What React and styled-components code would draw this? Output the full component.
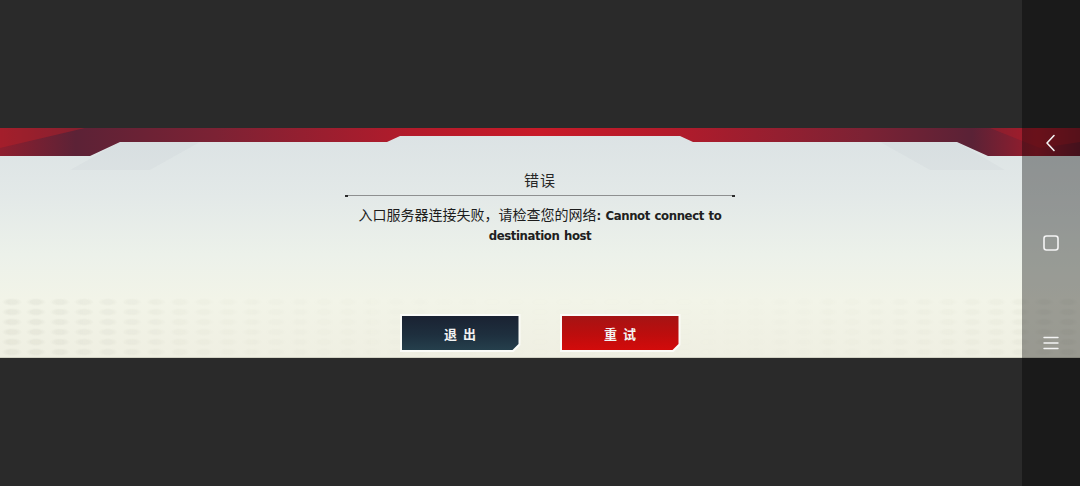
import React from "react";
import styled, { createGlobalStyle } from "styled-components";

const Global = createGlobalStyle`
  html, body { margin: 0; padding: 0; background: #2a2a2a; }
  body { width: 1080px; height: 486px; overflow: hidden; }
  #root { width: 1080px; height: 486px; }
`;

const Screen = styled.div`
  position: relative;
  width: 1080px;
  height: 486px;
  background: #2a2a2a;
  display: flex;
  flex-direction: column;
  padding-top: 128px;
  box-sizing: border-box;
  font-family: "Noto Sans CJK SC", "Noto Sans", sans-serif;
`;

const Band = styled.div`
  position: relative;
  height: 230px;
  width: 100%;
  box-sizing: border-box;
  background: linear-gradient(180deg, #dbe2e4 0%, #e3e9e8 30%, #ecf1ea 55%, #f2f4e8 75%, #efefe2 100%);
  border-bottom: 1px solid #d2d2c4;
  display: flex;
  flex-direction: column;
  align-items: center;
  padding-top: 42px;
  padding-bottom: 5px;
  overflow: hidden;
`;

const HexFloor = styled.div`
  position: absolute;
  left: 0;
  right: 0;
  bottom: 0;
  height: 60px;
  background-image: radial-gradient(ellipse 10px 4px at 50% 50%, rgba(110, 110, 90, 0.07) 50%, transparent 100%);
  background-size: 24px 10px;
  -webkit-mask-image: linear-gradient(90deg, #000 0%, rgba(0,0,0,0.35) 20%, rgba(0,0,0,0.08) 45%, rgba(0,0,0,0.08) 65%, rgba(0,0,0,0.3) 85%, rgba(0,0,0,0.6) 100%);
  mask-image: linear-gradient(90deg, #000 0%, rgba(0,0,0,0.35) 20%, rgba(0,0,0,0.08) 45%, rgba(0,0,0,0.08) 65%, rgba(0,0,0,0.3) 85%, rgba(0,0,0,0.6) 100%);
  pointer-events: none;
`;

const Header = styled.svg`
  position: absolute;
  left: 0;
  top: 0;
  width: 1080px;
  height: 60px;
  pointer-events: none;
`;

const Title = styled.div`
  position: relative;
  font-size: 15px;
  line-height: 20px;
  color: #262626;
  letter-spacing: 1px;
`;

const Divider = styled.div`
  position: relative;
  display: flex;
  align-items: center;
  width: 390px;
  margin-top: 4px;
  height: 3px;
`;

const Tick = styled.span`
  width: 3px;
  height: 2px;
  background: #2c2c2c;
`;

const Rule = styled.span`
  flex: 1;
  height: 1px;
  background: #8e9090;
`;

const Message = styled.div`
  position: relative;
  margin-top: 8px;
  font-size: 14px;
  line-height: 18px;
  color: #1c1c1c;
  text-align: center;
`;

const Latin = styled.span`
  font-family: "DejaVu Sans", sans-serif;
  font-weight: bold;
  font-stretch: condensed;
  font-size: 13px;
  letter-spacing: -0.4px;
  word-spacing: 1px;
  color: #202020;
`;

const Buttons = styled.div`
  position: relative;
  margin-top: auto;
  display: flex;
  gap: 39px;
`;

const ButtonFrame = styled.div`
  width: 121px;
  height: 38px;
  padding: 2px;
  box-sizing: border-box;
  background: #fbfcf8;
  clip-path: polygon(0 0, 100% 0, 100% calc(100% - 7px), calc(100% - 7px) 100%, 0 100%);
  cursor: pointer;
`;

const ButtonFace = styled.div`
  width: 100%;
  height: 100%;
  display: flex;
  align-items: center;
  justify-content: center;
  clip-path: polygon(0 0, 100% 0, 100% calc(100% - 6px), calc(100% - 6px) 100%, 0 100%);
  background: ${(p) =>
    p.$variant === "red"
      ? "linear-gradient(180deg, #a51414 0%, #bd0d0d 55%, #d30b0b 100%)"
      : "linear-gradient(180deg, #1a2232 0%, #1e2f3e 55%, #253f4c 100%)"};
  color: #f3f3f3;
  font-size: 13px;
  font-weight: bold;
  letter-spacing: 6px;
  text-indent: 6px;
`;

const NavBar = styled.div`
  position: absolute;
  top: 0;
  right: 0;
  width: 58px;
  height: 486px;
  background: rgba(0, 0, 0, 0.36);
  display: flex;
  flex-direction: column;
  align-items: center;
  justify-content: center;
  gap: 76px;
`;

const NavIcon = styled.svg`
  width: 24px;
  height: 24px;
  display: block;
`;

function Btn({ variant, children }) {
  return (
    <ButtonFrame>
      <ButtonFace $variant={variant}>{children}</ButtonFace>
    </ButtonFrame>
  );
}

export default function App() {
  return (
    <>
      <Global />
      <Screen>
        <Band>
          <HexFloor />
          <Header viewBox="0 0 1080 60">
            <defs>
              <linearGradient id="redg" x1="0" y1="0" x2="1" y2="0">
                <stop offset="0" stopColor="#8e1e2e" />
                <stop offset="0.07" stopColor="#5c2236" />
                <stop offset="0.2" stopColor="#7c2234" />
                <stop offset="0.38" stopColor="#b31b2b" />
                <stop offset="0.5" stopColor="#c81b29" />
                <stop offset="0.62" stopColor="#b31b2b" />
                <stop offset="0.8" stopColor="#7c2234" />
                <stop offset="0.9" stopColor="#5a2236" />
                <stop offset="0.96" stopColor="#9a1c2c" />
                <stop offset="1" stopColor="#6a1c2c" />
              </linearGradient>
            </defs>
            <polygon points="120,14 200,14 150,42 70,42" fill="rgba(60,60,70,0.025)" />
            <polygon points="880,14 957,14 1005,42 930,42" fill="rgba(60,60,70,0.025)" />
            <polygon
              points="0,0 1080,0 1080,28 988,28 957,14 693,14 680,8 400,8 387,14 120,14 90,28 0,28"
              fill="url(#redg)"
            />
            <polygon points="0,0 85,0 0,20" fill="rgba(190,30,40,0.45)" />
            <polygon points="1080,0 990,0 1040,20 1080,14" fill="rgba(190,30,40,0.35)" />
          </Header>
          <Title>错误</Title>
          <Divider>
            <Tick />
            <Rule />
            <Tick />
          </Divider>
          <Message>
            入口服务器连接失败，请检查您的网络<Latin>: Cannot connect to</Latin>
            <br />
            <Latin>destination host</Latin>
          </Message>
          <Buttons>
            <Btn variant="dark">退出</Btn>
            <Btn variant="red">重试</Btn>
          </Buttons>
        </Band>
        <NavBar>
          <NavIcon viewBox="0 0 24 24">
            <path d="M15 4.5 L8 12 L15 19.5" fill="none" stroke="#f4f4f4" strokeWidth="1.6" strokeLinecap="round" strokeLinejoin="round" />
          </NavIcon>
          <NavIcon viewBox="0 0 24 24">
            <rect x="5" y="5" width="14" height="14" rx="2.5" fill="none" stroke="#f4f4f4" strokeWidth="1.6" />
          </NavIcon>
          <NavIcon viewBox="0 0 24 24">
            <path d="M5 6.5 H19 M5 12 H19 M5 17.5 H19" fill="none" stroke="#f4f4f4" strokeWidth="1.4" strokeLinecap="round" />
          </NavIcon>
        </NavBar>
      </Screen>
    </>
  );
}
